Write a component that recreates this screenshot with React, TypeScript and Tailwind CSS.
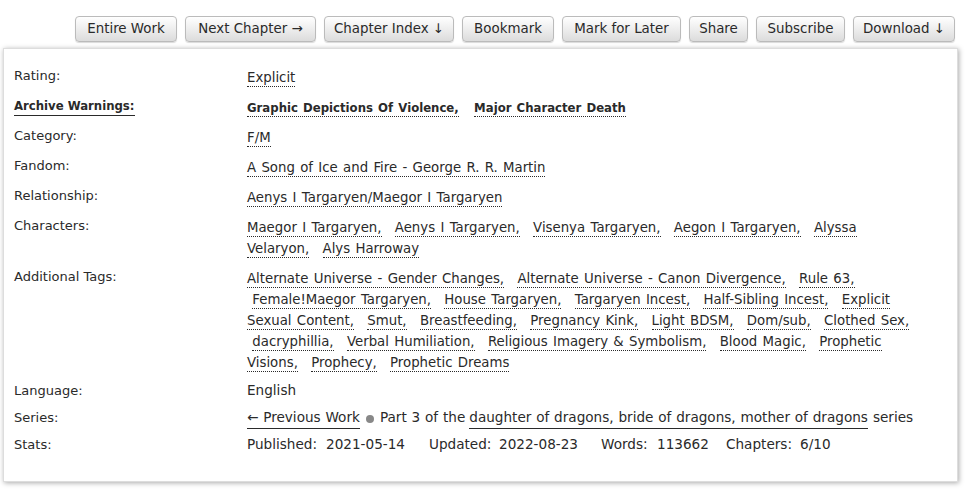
import React from "react";

const FONT = { fontFamily: '"DejaVu Sans", Verdana, sans-serif' };
const BOLD = { fontFamily: '"DejaVu Sans Condensed", "Liberation Sans", sans-serif' };

function Btn({ children, w }: { children: React.ReactNode; w: string }) {
  return (
    <div
      className={
        "h-[26px] flex items-center justify-center rounded-[4px] border border-[#bbb] bg-gradient-to-b from-white to-[#dcdcdc] text-[#2a2a2a] text-[13.4px] shadow-[0_1px_1px_rgba(0,0,0,0.15)] whitespace-nowrap " +
        w
      }
    >
      {children}
    </div>
  );
}

function Tag({ t, last, bold, lead }: { t: string; last?: boolean; bold?: boolean; lead?: boolean }) {
  return (
    <>
      {lead ? "\u00a0" : null}
      <span
        className={"border-b border-dotted border-[#2a2a2a] pb-[1px] " + (bold ? "font-bold text-[13px]" : "")}
        style={bold ? BOLD : undefined}
      >
        {t}
        {last ? "" : ","}
      </span>
      {last ? null : <span className={bold ? "mr-[10px]" : "mr-[8px]"}> </span>}
    </>
  );
}

type T = string | { t: string; lead: boolean };

function TagRow({
  label,
  tags,
  bold,
  labelLink,
}: {
  label: string;
  tags: T[];
  bold?: boolean;
  labelLink?: boolean;
}) {
  return (
    <div className="flex mb-[9px]">
      <div className="w-[233px] shrink-0 leading-[17px] text-[13px]">
        {labelLink ? (
          <span className="font-bold border-b border-[#2a2a2a] pb-[2px]" style={BOLD}>
            {label}
          </span>
        ) : (
          label
        )}
      </div>
      <div className="w-[668px] leading-[21px] text-[13.3px] [word-spacing:1.1px]">
        {tags.map((t, i) =>
          typeof t === "string" ? (
            <Tag key={i} t={t} last={i === tags.length - 1} bold={bold} />
          ) : (
            <Tag key={i} t={t.t} lead={t.lead} last={i === tags.length - 1} bold={bold} />
          )
        )}
      </div>
    </div>
  );
}

export default function App() {
  const buttons: [string, string][] = [
    ["Entire Work", "w-[102px]"],
    ["Next Chapter →", "w-[131px]"],
    ["Chapter Index ↓", "w-[130px]"],
    ["Bookmark", "w-[92px]"],
    ["Mark for Later", "w-[119px]"],
    ["Share", "w-[59px]"],
    ["Subscribe", "w-[89px]"],
    ["Download ↓", "w-[102px]"],
  ];
  return (
    <div className="w-[970px] h-[490px] bg-white pt-[16px] pl-[3px] text-[#2a2a2a] text-[13px]" style={FONT}>
      <div className="w-[955px] flex justify-end gap-[8px] pr-[3px]">
        {buttons.map(([b, w]) => (
          <Btn key={b} w={w}>
            {b}
          </Btn>
        ))}
      </div>
      <div className="mt-[6px] w-[955px] h-[434px] border border-[#ddd] shadow-[1px_1px_5px_#aaa] pl-[10px] pt-[18px]">
        <TagRow label="Rating:" tags={["Explicit"]} />
        <TagRow
          label="Archive Warnings:"
          labelLink
          bold
          tags={["Graphic Depictions Of Violence", "Major Character Death"]}
        />
        <TagRow label="Category:" tags={["F/M"]} />
        <TagRow label="Fandom:" tags={["A Song of Ice and Fire - George R. R. Martin"]} />
        <TagRow label="Relationship:" tags={["Aenys I Targaryen/Maegor I Targaryen"]} />
        <TagRow
          label="Characters:"
          tags={[
            "Maegor I Targaryen",
            "Aenys I Targaryen",
            "Visenya Targaryen",
            "Aegon I Targaryen",
            "Alyssa Velaryon",
            "Alys Harroway",
          ]}
        />
        <TagRow
          label="Additional Tags:"
          tags={[
            "Alternate Universe - Gender Changes",
            "Alternate Universe - Canon Divergence",
            "Rule 63",
            { t: "Female!Maegor Targaryen", lead: true },
            "House Targaryen",
            "Targaryen Incest",
            "Half-Sibling Incest",
            "Explicit Sexual Content",
            "Smut",
            "Breastfeeding",
            "Pregnancy Kink",
            "Light BDSM",
            "Dom/sub",
            "Clothed Sex",
            { t: "dacryphillia", lead: true },
            "Verbal Humiliation",
            "Religious Imagery & Symbolism",
            "Blood Magic",
            "Prophetic Visions",
            "Prophecy",
            "Prophetic Dreams",
          ]}
        />
        <div className="flex mb-[10px] leading-[17px]">
          <div className="w-[233px] shrink-0">Language:</div>
          <div className="text-[13.6px]">English</div>
        </div>
        <div className="flex mb-[7px] leading-[17px]">
          <div className="w-[233px] shrink-0">Series:</div>
          <div className="whitespace-nowrap text-[13.6px] [word-spacing:0.5px] flex items-baseline">
            <span className="border-b border-[#2a2a2a] pb-[2px]">← Previous Work</span>
            <span className="inline-block w-[8px] h-[8px] rounded-full bg-[#888] mx-[6px] self-center"></span>
            <span className="mr-[4px]">Part 3 of the</span>
            <span className="border-b border-[#2a2a2a] pb-[2px]">
              daughter of dragons, bride of dragons, mother of dragons
            </span>
            <span className="ml-[5px]">series</span>
          </div>
        </div>
        <div className="flex leading-[17px]">
          <div className="w-[233px] shrink-0">Stats:</div>
          <div className="flex whitespace-nowrap text-[13.6px]">
            <span className="w-[79px]">Published:</span>
            <span className="w-[103px]">2021-05-14</span>
            <span className="w-[70px]">Updated:</span>
            <span className="w-[102px]">2022-08-23</span>
            <span className="w-[56px]">Words:</span>
            <span className="w-[69px]">113662</span>
            <span className="w-[74px]">Chapters:</span>
            <span>6/10</span>
          </div>
        </div>
      </div>
    </div>
  );
}
